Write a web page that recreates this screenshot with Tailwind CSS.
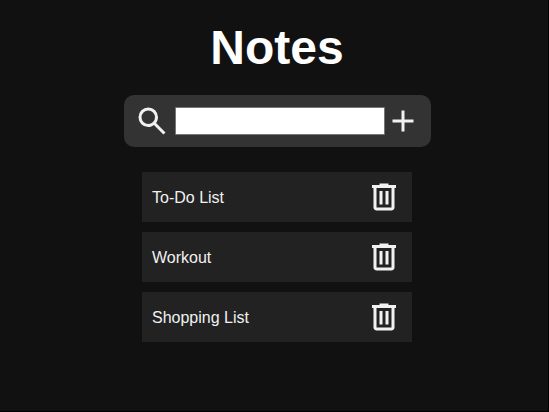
<!DOCTYPE html>
<html lang="en">
<head>
<meta charset="utf-8">
<title>Notes</title>
<script src="https://cdn.jsdelivr.net/npm/@tailwindcss/browser@4"></script>
</head>
<body class="bg-black font-['Liberation_Sans',Arial,sans-serif] text-[#f1f1f1]">
<main class="flex h-[411px] w-[548px] flex-col items-center overflow-hidden bg-[#111] pl-[7px] pr-px pt-5">
  <h1 class="text-5xl leading-[55px] font-bold text-white">Notes</h1>
  <div class="mt-5 flex h-13 w-[307px] shrink-0 items-center rounded-[10px] bg-[#333] pl-[10px]">
    <svg class="size-9" viewBox="0 -960 960 960" fill="currentColor"><path d="M784-120 532-372q-30 24-69 38t-83 14q-109 0-184.5-75.5T120-580q0-109 75.5-184.5T380-840q109 0 184.5 75.5T640-580q0 44-14 83t-38 69l252 252-56 56ZM380-400q75 0 127.5-52.5T560-580q0-75-52.5-127.5T380-760q-75 0-127.5 52.5T200-580q0 75 52.5 127.5T380-400Z"/></svg>
    <input aria-label="Search notes" class="ml-[5px] h-7 w-[210px] rounded-[1px] border border-[#767676] bg-white text-black">
    <svg class="size-9" viewBox="0 -960 960 960" fill="currentColor"><path d="M440-440H200v-80h240v-240h80v240h240v80H520v240h-80v-240Z"/></svg>
  </div>
  <ul class="mt-[25px] flex w-[270px] flex-col gap-2.5">
    <li class="flex h-[50px] items-center justify-between bg-[#222] px-2.5"><span class="pt-0.5">To-Do List</span><svg class="size-9" viewBox="0 -960 960 960" fill="currentColor"><path d="M280-120q-33 0-56.5-23.5T200-200v-520h-40v-80h200v-40h240v40h200v80h-40v520q0 33-23.5 56.5T680-120H280Zm400-600H280v520h400v-520ZM360-280h80v-360h-80v360Zm160 0h80v-360h-80v360Z"/></svg></li>
    <li class="flex h-[50px] items-center justify-between bg-[#222] px-2.5"><span class="pt-0.5">Workout</span><svg class="size-9" viewBox="0 -960 960 960" fill="currentColor"><path d="M280-120q-33 0-56.5-23.5T200-200v-520h-40v-80h200v-40h240v40h200v80h-40v520q0 33-23.5 56.5T680-120H280Zm400-600H280v520h400v-520ZM360-280h80v-360h-80v360Zm160 0h80v-360h-80v360Z"/></svg></li>
    <li class="flex h-[50px] items-center justify-between bg-[#222] px-2.5"><span class="pt-0.5">Shopping List</span><svg class="size-9" viewBox="0 -960 960 960" fill="currentColor"><path d="M280-120q-33 0-56.5-23.5T200-200v-520h-40v-80h200v-40h240v40h200v80h-40v520q0 33-23.5 56.5T680-120H280Zm400-600H280v520h400v-520ZM360-280h80v-360h-80v360Zm160 0h80v-360h-80v360Z"/></svg></li>
  </ul>
</main>
</body>
</html>
